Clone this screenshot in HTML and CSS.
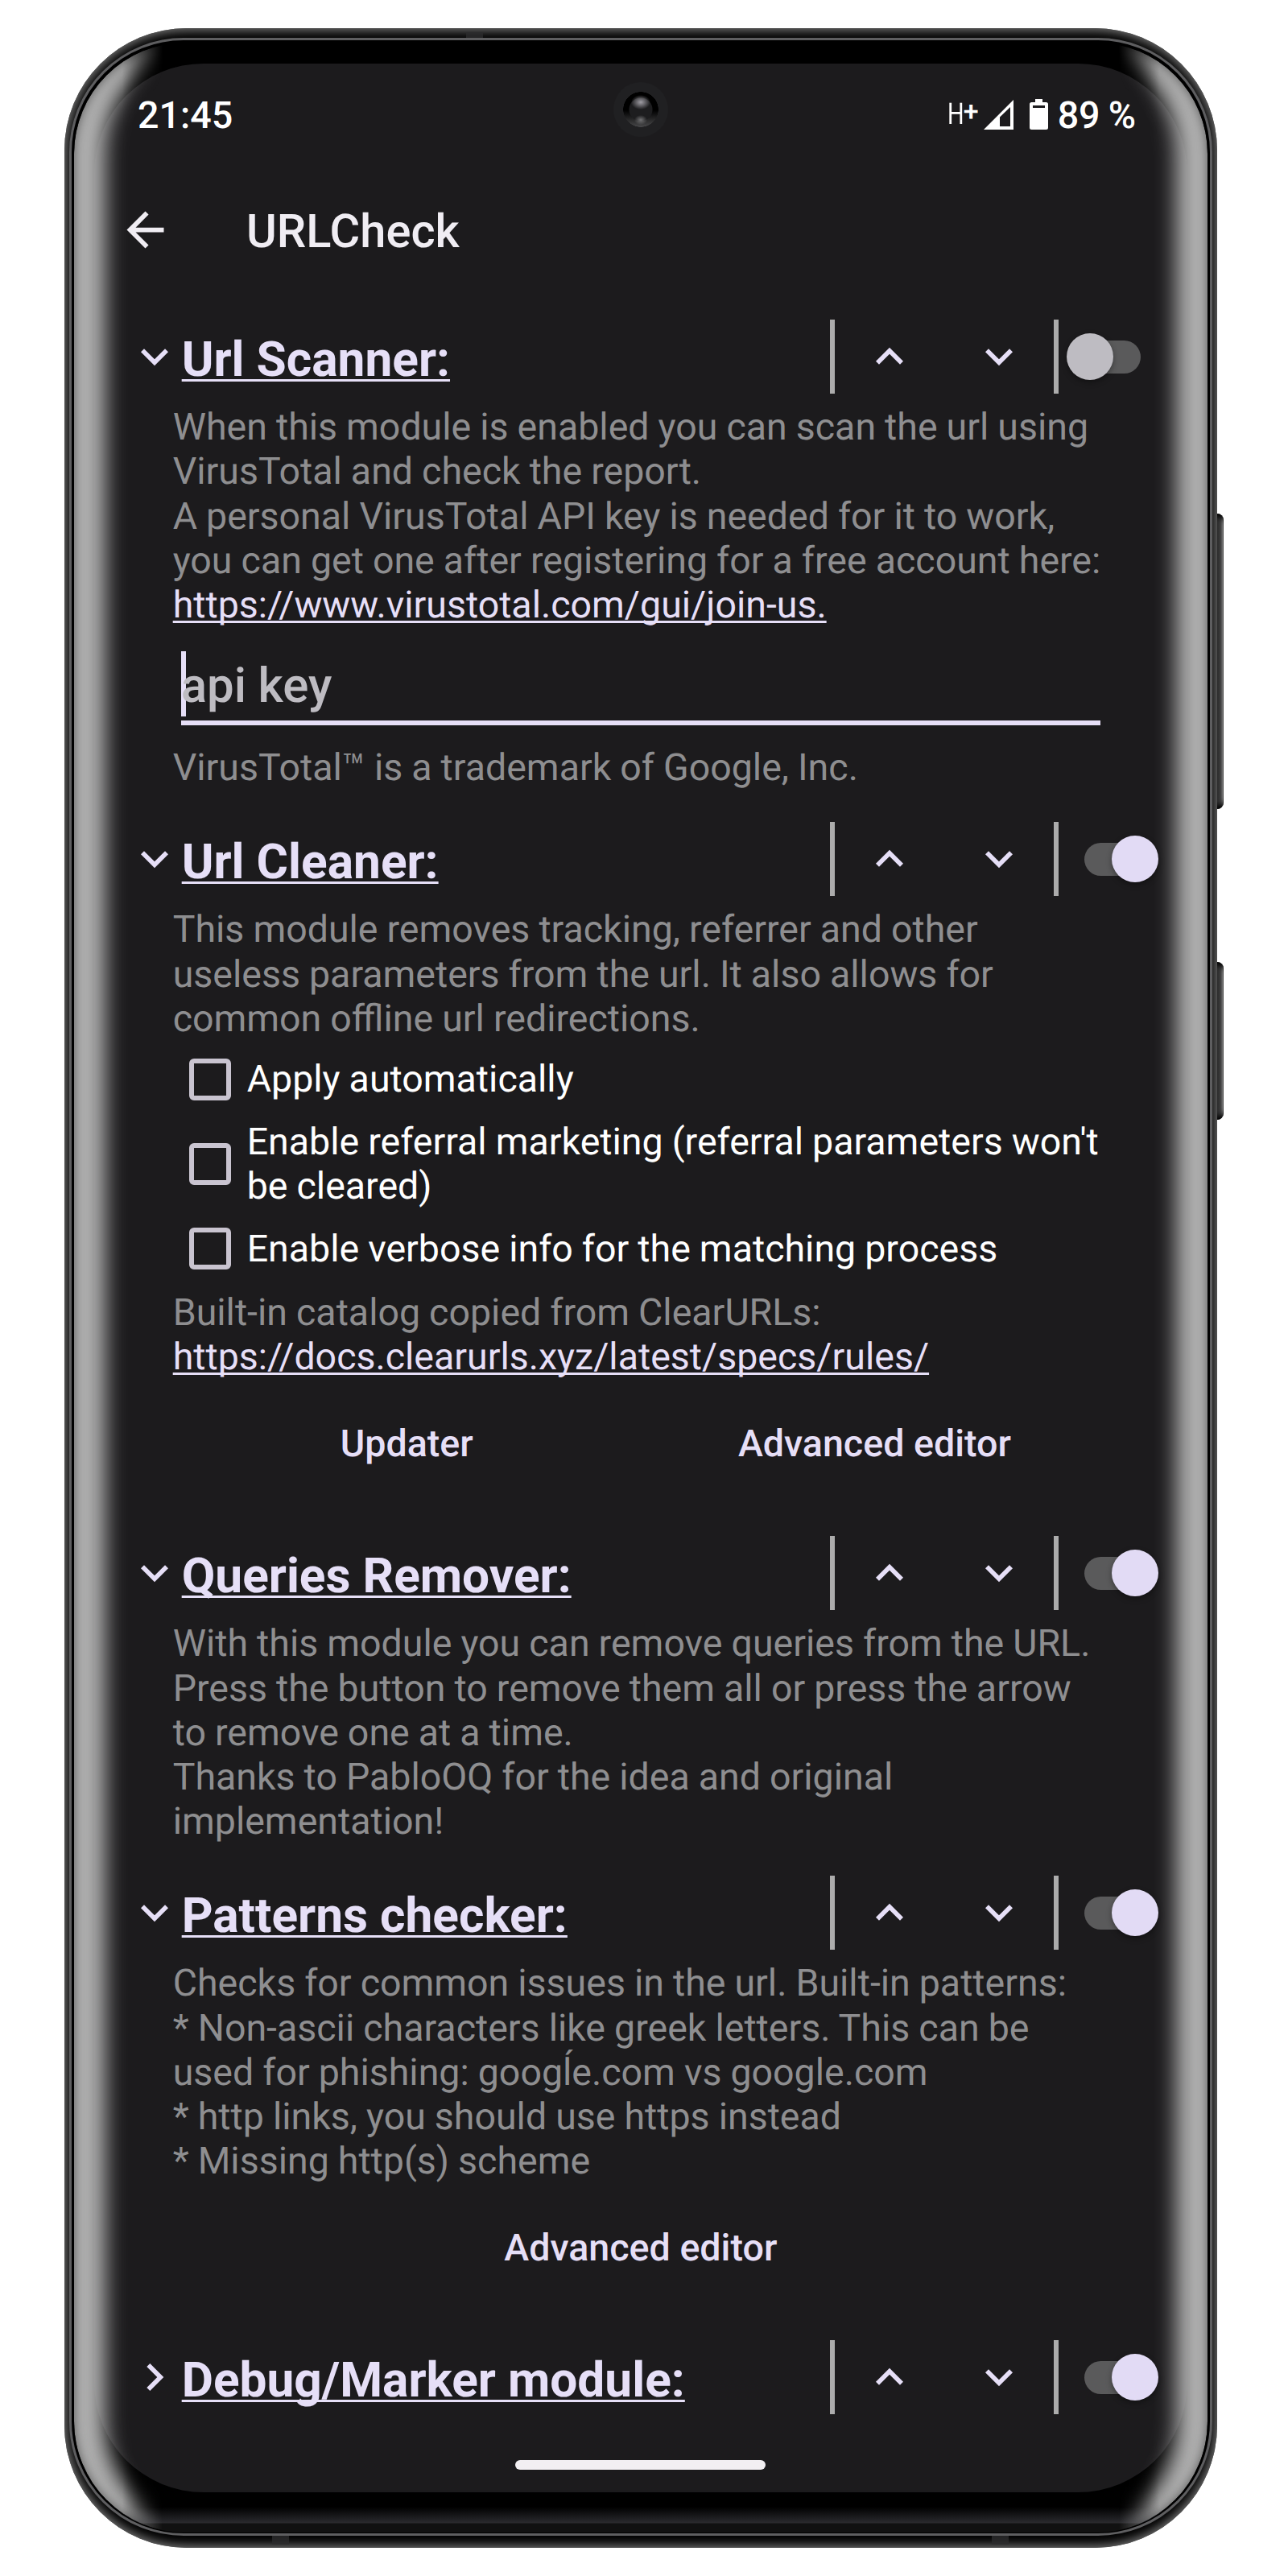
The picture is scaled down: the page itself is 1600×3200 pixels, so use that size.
FILE: index.html
```
<!DOCTYPE html>
<html lang="en">
<head>
<meta charset="utf-8">
<title>URLCheck</title>
<link rel="stylesheet" href="styles.css">
</head>
<body>
<svg class="defs" aria-hidden="true">
  <symbol id="down" viewBox="0 0 24 24"><path d="M16.59 8.59 12 13.17 7.41 8.59 6 10l6 6 6-6z"/></symbol>
  <symbol id="up" viewBox="0 0 24 24"><path d="m12 8-6 6 1.41 1.41L12 10.83l4.59 4.58L18 14z"/></symbol>
  <symbol id="right" viewBox="0 0 24 24"><path d="M10 6 8.59 7.41 13.17 12l-4.58 4.59L10 18l6-6z"/></symbol>
</svg>
<div class="phone">
  <span class="side-key volume"></span>
  <span class="side-key power"></span>
  <div class="metal"></div>
  <span class="antenna antenna-top"></span>
  <span class="antenna antenna-bl"></span>
  <span class="antenna antenna-br"></span>
  <div class="rim"></div>
  <div class="glass"></div>
  <div class="display"></div>
  <div class="glare"></div>
  <span class="camera"></span>

  <div class="screen">
    <div class="status">
      <span class="clock">21:45</span>
      <span class="network"><span class="h">H</span><span class="plus">+</span></span>
      <svg class="signal" viewBox="0 0 37 37"><path fill-rule="evenodd" d="M37 0v37H0zM33 9 20 21.500V33H33z"/></svg>
      <svg class="battery" viewBox="0 0 23 38"><path fill-rule="evenodd" d="M7 0h9v4h4.500Q23 4 23 6.500v29Q23 38 20.500 38h-18Q0 38 0 35.500v-29Q0 4 2.500 4H7zM4 8v3h15V8z"/></svg>
      <span class="percent">89 %</span>
    </div>
    <header class="toolbar">
      <svg class="back" viewBox="0 0 24 24"><path d="M20 11H7.830l5.590-5.590L12 4l-8 8 8 8 1.410-1.410L7.830 13H20z"/></svg>
      <h1>URLCheck</h1>
    </header>

    <main>
      <section class="module">
        <div class="head">
          <svg class="icon"><use href="#down"/></svg><h2><span>Url Scanner:</span></h2>
          <i class="bar"></i><span class="btn"><svg class="icon"><use href="#up"/></svg></span><span class="btn"><svg class="icon"><use href="#down"/></svg></span><i class="bar"></i>
          <span class="switch"></span>
        </div>
        <div class="body">
          <p>When this module is enabled you can scan the url using<br>VirusTotal and check the report.<br>A personal VirusTotal API key is needed for it to work,<br>you can get one after registering for a free account here:<br><a>https://www.virustotal.com/gui/join-us.</a></p>
          <div class="field"><span>api key</span></div>
          <p>VirusTotal™ is a trademark of Google, Inc.</p>
        </div>
      </section>

      <section class="module">
        <div class="head">
          <svg class="icon"><use href="#down"/></svg><h2><span>Url Cleaner:</span></h2>
          <i class="bar"></i><span class="btn"><svg class="icon"><use href="#up"/></svg></span><span class="btn"><svg class="icon"><use href="#down"/></svg></span><i class="bar"></i>
          <span class="switch on"></span>
        </div>
        <div class="body">
          <p>This module removes tracking, referrer and other<br>useless parameters from the url. It also allows for<br>common offline url redirections.</p>
          <div class="checks">
            <div class="check"><i></i><span>Apply automatically</span></div>
            <div class="check two"><i></i><span>Enable referral marketing (referral parameters won't<br>be cleared)</span></div>
            <div class="check"><i></i><span>Enable verbose info for the matching process</span></div>
          </div>
          <p>Built-in catalog copied from ClearURLs:<br><a>https://docs.clearurls.xyz/latest/specs/rules/</a></p>
          <div class="actions"><span>Updater</span><span>Advanced editor</span></div>
        </div>
      </section>

      <section class="module">
        <div class="head">
          <svg class="icon"><use href="#down"/></svg><h2><span>Queries Remover:</span></h2>
          <i class="bar"></i><span class="btn"><svg class="icon"><use href="#up"/></svg></span><span class="btn"><svg class="icon"><use href="#down"/></svg></span><i class="bar"></i>
          <span class="switch on"></span>
        </div>
        <div class="body">
          <p>With this module you can remove queries from the URL.<br>Press the button to remove them all or press the arrow<br>to remove one at a time.<br>Thanks to PabloOQ for the idea and original<br>implementation!</p>
        </div>
      </section>

      <section class="module">
        <div class="head">
          <svg class="icon"><use href="#down"/></svg><h2><span>Patterns checker:</span></h2>
          <i class="bar"></i><span class="btn"><svg class="icon"><use href="#up"/></svg></span><span class="btn"><svg class="icon"><use href="#down"/></svg></span><i class="bar"></i>
          <span class="switch on"></span>
        </div>
        <div class="body">
          <p>Checks for common issues in the url. Built-in patterns:<br>* Non-ascii characters like greek letters. This can be<br>used for phishing: googĺe.com vs google.com<br>* http links, you should use https instead<br>* Missing http(s) scheme</p>
          <div class="actions"><span>Advanced editor</span></div>
        </div>
      </section>

      <section class="module">
        <div class="head">
          <svg class="icon"><use href="#right"/></svg><h2><span>Debug/Marker module:</span></h2>
          <i class="bar"></i><span class="btn"><svg class="icon"><use href="#up"/></svg></span><span class="btn"><svg class="icon"><use href="#down"/></svg></span><i class="bar"></i>
          <span class="switch on"></span>
        </div>
      </section>
    </main>
    <div class="home"></div>
  </div>
</div>
</body>
</html>
```

FILE: styles.css
```
* { box-sizing: border-box; }
body {
  margin: 0;
  background: #fff;
  font-family: Roboto, "Noto Sans", sans-serif;
  font-size: 46.5px;
  line-height: 55.2px;
  text-rendering: geometricPrecision;
  height: 3200px;
  overflow: hidden;
}
h1, h2, p { margin: 0; }
.defs { position: absolute; width: 0; height: 0; }
svg { display: block; flex: none; }
.icon { width: 68px; height: 68px; fill: #e6dff7; }

/* Device shell */
.phone {
  position: relative;
  width: 1432px;
  height: 3130px;
  margin: 35px 0 0 80px;
  padding: 44px 37px 34px;
}
.metal, .rim, .glass, .display, .glare, .side-key, .antenna, .camera { position: absolute; }
.metal {
  inset: 0;
  border-radius: 152px;
  background: #000;
  box-shadow: inset 0 0 13px 3px #7c7c7c;
}
.antenna { width: 21px; height: 12px; background: #2c2c2d; opacity: .8; }
.antenna-top { left: 499px; top: 5px; }
.antenna-bl { left: 258px; bottom: 4px; }
.antenna-br { left: 1152px; bottom: 4px; }
.rim {
  inset: 12px 6px 15px;
  border-radius: 142px;
  background: #000;
  border: 3px solid #5e5e60;
}
.glass {
  inset: 17px 11px 19px;
  border-radius: 138px;
  background: linear-gradient(to top, #111 0 11px, #2a2a2e 12px, #000 32px);
}
.display {
  inset: 44px 37px 69px;
  border-radius: 136px;
  background: #1c1b1d;
}
.glare {
  inset: 18px 12px 19px;
  border-radius: 138px;
  box-shadow: inset 0 0 14px rgba(0,0,0,.5), inset 41px 0 26px -2px #b0b0b0, inset -41px 0 26px -2px #b0b0b0;
  -webkit-mask-image: linear-gradient(90deg, #000 60px, transparent 110px, transparent calc(100% - 110px), #000 calc(100% - 60px));
  mask-image: linear-gradient(90deg, #000 60px, transparent 110px, transparent calc(100% - 110px), #000 calc(100% - 60px));
}
.side-key {
  left: 1430px;
  width: 10px;
  border-radius: 0 8px 8px 0;
  background: linear-gradient(90deg, #333 40%, #4a4a4b 70%, #858585 85%, #555);
  box-shadow: inset 0 7px 6px -3px #000, inset 0 -7px 6px -3px #000;
}
.volume { top: 603px; height: 367px; }
.power { top: 1160px; height: 196px; }
.camera {
  left: 682px;
  top: 67px;
  width: 68px;
  height: 68px;
  border-radius: 50%;
  background:
    radial-gradient(ellipse 12px 9px at 34px 25px, #a09ea5, transparent),
    radial-gradient(ellipse 8px 6px at 34px 47px, #727274, transparent),
    radial-gradient(circle at 34px 34px, #1d1d1f 14px, transparent 15px),
    radial-gradient(circle at 34px 34px, transparent 21.5px, #202022 22px),
    linear-gradient(#000 35px, #48484a 56px);
}

/* App */
.screen { position: relative; height: 3017px; }
.status {
  display: flex;
  padding: 37px 64px 0 54px;
  color: #fff;
  font-weight: 500;
  font-size: 46.6px;
  word-spacing: -1.5px;
}
.clock { flex: 1; }
.clock, .percent, .body p, .check span, .actions span { transform: translateY(1px); }
.network { display: flex; width: 45px; font-weight: 400; }
.h { font-size: 37px; line-height: 53px; width: 20px; transform: scaleX(.78); transform-origin: 0 0; }
.plus { font-size: 34px; line-height: 46px; font-weight: 500; }
.signal { width: 37px; height: 37px; margin: 8px 20px 0 0; fill: #fff; }
.battery { width: 23px; height: 38px; margin: 7px 12px 0 0; fill: #fff; }
.toolbar {
  display: flex;
  align-items: center;
  height: 150px;
  margin: 42px 0 0 29px;
}
.back { width: 69px; height: 69px; margin: -6px 91px 0 0; fill: #f0edf3; }
h1 { font-size: 57.8px; line-height: 68px; font-weight: 500; color: #f0edf3; }
main { padding: 34px 58px 0 40.7px; }
.module { margin-bottom: 40px; }
.head { display: flex; align-items: center; height: 92px; }
h2 {
  flex: 1;
  padding-top: 7px;
  font-size: 60.4px;
  line-height: 85px;
  font-weight: 700;
  color: #e6dff7;
}
h2 span, a {
  text-decoration: underline;
  text-decoration-thickness: 3.3px;
  text-underline-offset: 4px;
  text-decoration-skip-ink: none;
}
.bar { width: 6px; height: 92px; background: #acacac; }
.btn { display: flex; justify-content: center; width: 136px; }
.switch {
  position: relative;
  width: 70px;
  height: 41px;
  margin-left: 32px;
  border-radius: 21px;
  background: #5a5a5b;
}
.switch::after {
  content: "";
  position: absolute;
  left: -22px;
  top: -8.500px;
  width: 58px;
  height: 58px;
  border-radius: 50%;
  background: #bebcc2;
  box-shadow: 0 3px 7px rgba(0,0,0,.35);
}
.switch.on::after { left: 34px; background: #e2dbf5; }
.body { padding: 14px 40px 0 57px; color: #8e8e90; white-space: nowrap; word-spacing: -.5px; }
a { color: #e6dff7; text-decoration-thickness: 2.6px; }
.field {
  height: 122px;
  margin: 0 10px 25px;
  border-bottom: 6px solid #e6dff7;
  display: flex;
  align-items: center;
  padding: 24px 0 0;
  font-size: 60px;
  font-weight: 500;
  line-height: 80px;
  color: #bebcc2;
}
.field span { padding-top: 5px; }
.field::before { content: ""; width: 6px; height: 81px; margin-right: -6px; background: #e6dff7; }
.checks { padding: 9px 0 12.9px 20px; color: #fff; }
.check { display: flex; align-items: center; height: 77.5px; }
.check.two { height: 133px; }
.check i {
  flex: none;
  width: 52px;
  height: 52px;
  margin-right: 20px;
  border: 6px solid #c9c4d0;
  border-radius: 6px;
}
.actions {
  display: flex;
  height: 155px;
  padding-top: 53px;
  font-size: 46.6px;
  font-weight: 500;
  word-spacing: 0;
  color: #e6dff7;
  text-align: center;
}
.actions span { flex: 1 1 0; }
.home {
  position: absolute;
  left: 523px;
  top: 2977px;
  width: 311px;
  height: 12px;
  border-radius: 6px;
  background: #f2eff2;
}
```
